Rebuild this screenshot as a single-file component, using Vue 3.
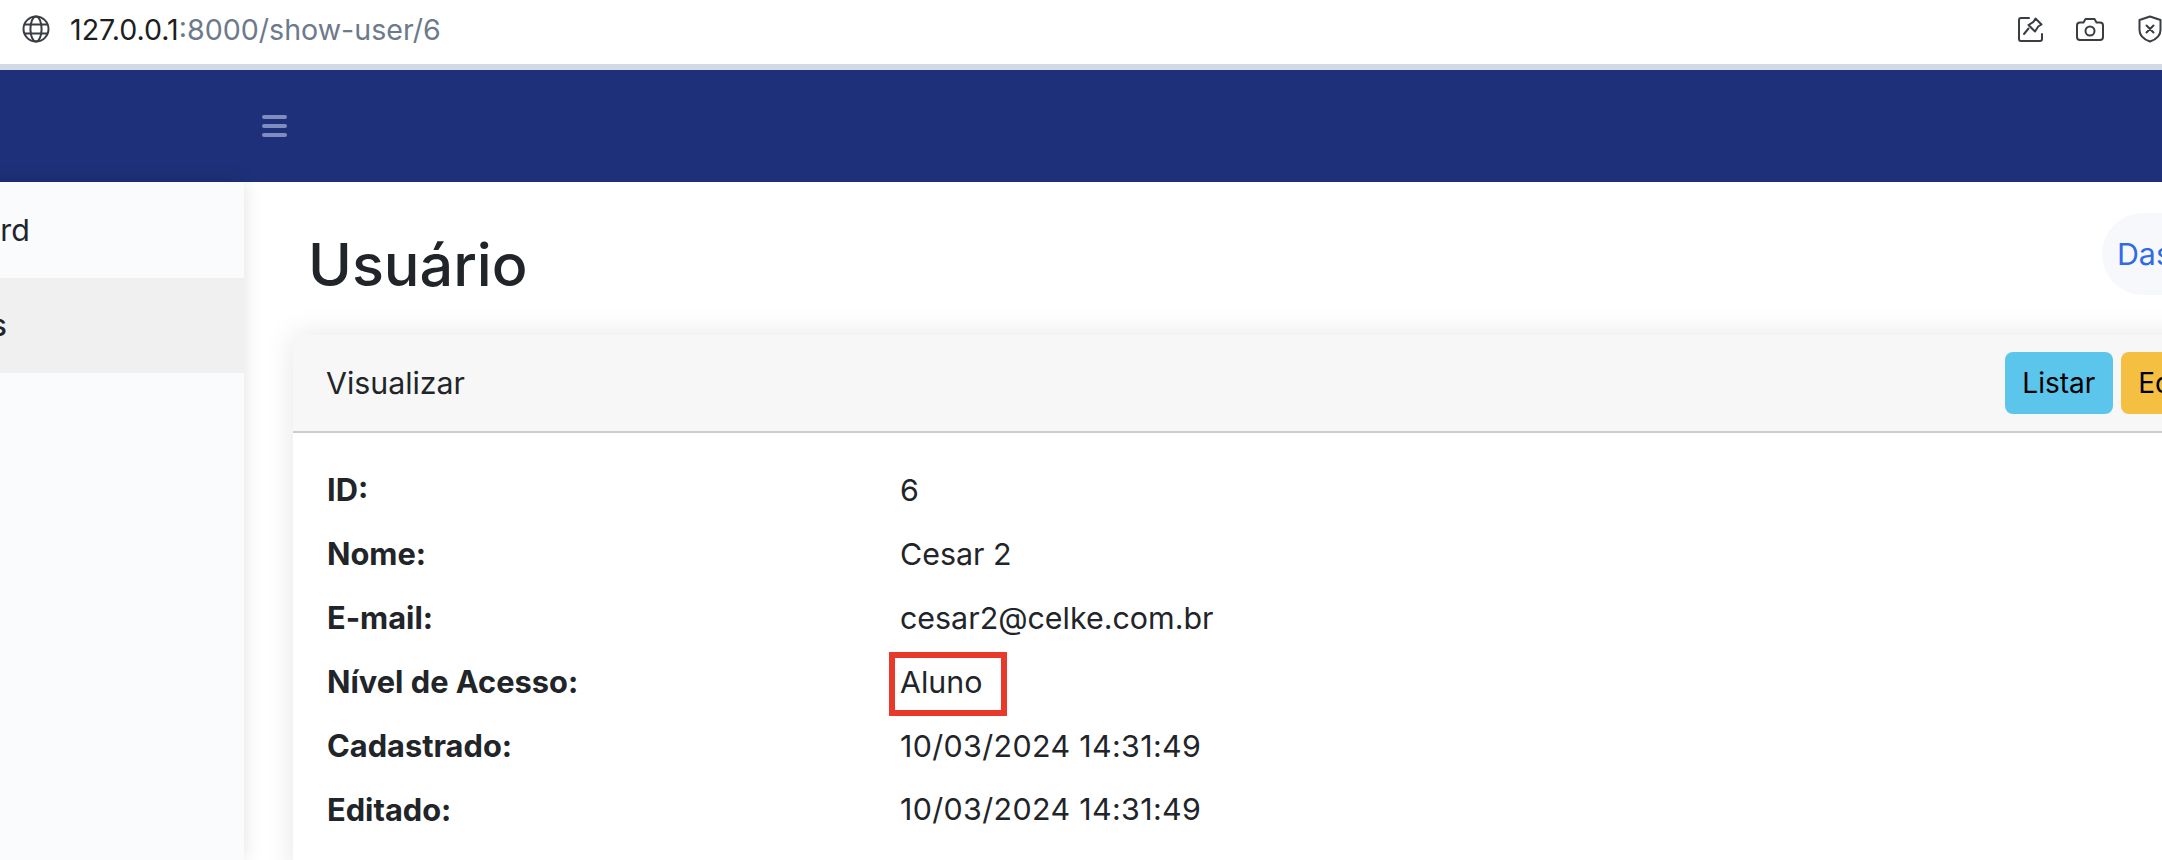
<script setup>
const rows = [
  { label: "ID:", value: "6" },
  { label: "Nome:", value: "Cesar 2" },
  { label: "E-mail:", value: "cesar2@celke.com.br" },
  { label: "Nível de Acesso:", value: "Aluno", marked: true },
  { label: "Cadastrado:", value: "10/03/2024 14:31:49", date: true },
  { label: "Editado:", value: "10/03/2024 14:31:49", date: true }
];
</script>

<template>
  <div class="page">
    <div class="browser-bar">
      <svg class="globe" viewBox="0 0 28 28" fill="none" stroke="#3a3d42" stroke-width="2">
        <circle cx="14" cy="14" r="12.5" />
        <ellipse cx="14" cy="14" rx="5.6" ry="12.5" />
        <path d="M2.4 9.5h23.2M2.4 18.5h23.2" />
      </svg>
      <div class="url"><span class="host">127.0.0.1</span>:8000/show-user/6</div>
      <div class="tools">
        <svg class="tool tool-pin" viewBox="0 0 26 26" fill="none" stroke="#3a3d42" stroke-width="2" stroke-linecap="round" stroke-linejoin="round">
          <path d="M11 2H3a2 2 0 0 0-2 2v19a2 2 0 0 0 2 2h19a2 2 0 0 0 2-2v-5" />
          <path d="M17.5 2.5l6 6-3.3 2-3.2 5-6.5-6.5 5-3.2z" />
          <path d="M10.5 12.5L6 18" />
        </svg>
        <svg class="tool tool-camera" viewBox="0 0 28 24" fill="none" stroke="#3a3d42" stroke-width="2" stroke-linejoin="round">
          <path d="M9.5 2h9l2 3.5H24a3 3 0 0 1 3 3V20a3 3 0 0 1-3 3H4a3 3 0 0 1-3-3V8.500a3 3 0 0 1 3-3h3.500z" />
          <circle cx="14" cy="14" r="4.500" />
        </svg>
        <svg class="tool tool-shield" viewBox="0 0 24 28" fill="none" stroke="#3a3d42" stroke-width="2" stroke-linecap="round" stroke-linejoin="round">
          <path d="M12 1.500l10.500 3.500v10c0 6-4.500 9.500-10.500 11.500C6 24.500 1.500 21 1.500 15V5z" />
          <path d="M8.500 10.500l7 7M15.500 10.500l-7 7" />
        </svg>
      </div>
    </div>

    <header class="topbar">
      <div class="hamburger">
        <span></span>
        <span></span>
        <span></span>
      </div>
    </header>

    <div class="body">
      <nav class="sidebar">
        <a class="side-item">Dashboard</a>
        <a class="side-item active">Usuários</a>
      </nav>

      <main class="content">
        <div class="title-row">
          <h1>Usuário</h1>
          <ol class="crumbs">
            <li class="crumb-link">Dashboard</li>
            <li>/</li>
            <li class="crumb-link">Usuários</li>
            <li>/</li>
            <li>Usuário</li>
          </ol>
        </div>

        <section class="card">
          <div class="card-header">
            <span>Visualizar</span>
            <div class="actions">
              <button type="button" class="btn btn-info">Listar</button>
              <button type="button" class="btn btn-warning">Editar</button>
              <button type="button" class="btn btn-danger">Apagar</button>
            </div>
          </div>
          <dl class="card-body">
            <template v-for="row in rows" :key="row.label">
              <dt>{{ row.label }}</dt>
              <dd>
                <span class="value" :class="{ date: row.date }">
                  {{ row.value }}
                  <i v-if="row.marked" class="marker"></i>
                </span>
              </dd>
            </template>
          </dl>
        </section>
      </main>
    </div>
  </div>
</template>

<style>
html,
body {
  margin: 0;
  background: #fff;
  overflow: hidden;
}
</style>

<style scoped>
.page {
  width: 2162px;
  height: 860px;
  overflow: hidden;
  display: flex;
  flex-direction: column;
  font-family: Inter, "Liberation Sans", sans-serif;
  color: #212529;
  background: #fff;
}

.browser-bar {
  height: 64px;
  flex: none;
  display: flex;
  align-items: center;
  background: #fff;
  border-bottom: 6px solid #d3dae5;
}

.globe {
  width: 28px;
  height: 28px;
  margin-left: 22px;
  margin-right: 20px;
  margin-top: -6px;
}

.url {
  font-size: 28.6px;
  color: #6c7a8c;
  margin-top: -6px;
}

.host {
  color: #1c1e21;
}

.tools {
  margin-left: auto;
  display: flex;
  align-items: center;
  margin-top: -6px;
}

.tool-pin {
  width: 26px;
  height: 26px;
}

.tool-camera {
  width: 28px;
  height: 24px;
  margin-left: 32px;
}

.tool-shield {
  width: 24px;
  height: 28px;
  margin-left: 34px;
}

.topbar {
  height: 112px;
  flex: none;
  display: flex;
  align-items: center;
  background: #1e3079;
  padding-left: 262px;
  box-sizing: border-box;
}

.hamburger {
  width: 25px;
  display: grid;
  gap: 5px;
}

.hamburger span {
  height: 4px;
  border-radius: 2px;
  background: #7f8cc0;
}

.body {
  flex: 1;
  display: flex;
  min-height: 0;
}

.sidebar {
  flex: none;
  width: 371px;
  margin-left: -127px;
  background: #f9fbfd;
  box-shadow: 0 0 18px rgba(0, 0, 0, 0.12);
  position: relative;
}

.side-item {
  display: flex;
  align-items: center;
  height: 95.5px;
  font-size: 30.4px;
}

.side-item.active {
  background: #f0f0f0;
  padding-left: 5px;
  font-weight: 500;
}

.content {
  flex: 1;
  min-width: 0;
  padding: 31px 0 0 49px;
}

.title-row {
  display: flex;
  align-items: flex-start;
  width: 2305px;
  margin-bottom: 33px;
}

h1 {
  margin: 13px 0 -1px 15px;
  font-size: 59.3px;
  line-height: 77px;
  font-weight: 500;
}

.crumbs {
  list-style: none;
  margin: 0 0 0 auto;
  padding: 0 16px 0 15px;
  height: 82px;
  display: flex;
  align-items: center;
  gap: 12px;
  border-radius: 41px;
  background: #f6f8fb;
  font-size: 30.4px;
  color: #6c757d;
}

.crumb-link {
  color: #2f6be6;
}

.card {
  width: 2111px;
  height: 540px;
  background: #fff;
  box-shadow: 0 0 28px rgba(0, 0, 0, 0.1);
}

.card-header {
  height: 96px;
  display: flex;
  align-items: center;
  justify-content: space-between;
  padding: 0 33px;
  background: #f7f7f7;
  border-bottom: 2px solid #ccc;
  font-size: 30.3px;
}

.actions {
  display: flex;
  gap: 8px;
}

.btn {
  height: 62px;
  padding: 0 17.5px;
  border: 0;
  border-radius: 8px;
  font: inherit;
  font-size: 28px;
  color: #000;
}

.btn-info {
  background: #5bc5ec;
}

.btn-warning {
  background: #f5bf42;
}

.btn-danger {
  background: #dc3545;
  color: #fff;
}

.card-body {
  margin: 0;
  padding: 25px 34px 0;
  display: grid;
  grid-template-columns: 573px 1fr;
  grid-auto-rows: 63.9px;
  align-items: center;
  font-size: 30.4px;
}

dt {
  font-weight: 700;
  font-size: 30.8px;
}

dd {
  margin: 0;
}

.value {
  position: relative;
  display: inline-block;
}

.date {
  letter-spacing: 0.36px;
}

.marker {
  position: absolute;
  left: -11px;
  top: -12px;
  width: 118px;
  height: 64px;
  box-sizing: border-box;
  border: 6px solid #e8392b;
}
</style>
